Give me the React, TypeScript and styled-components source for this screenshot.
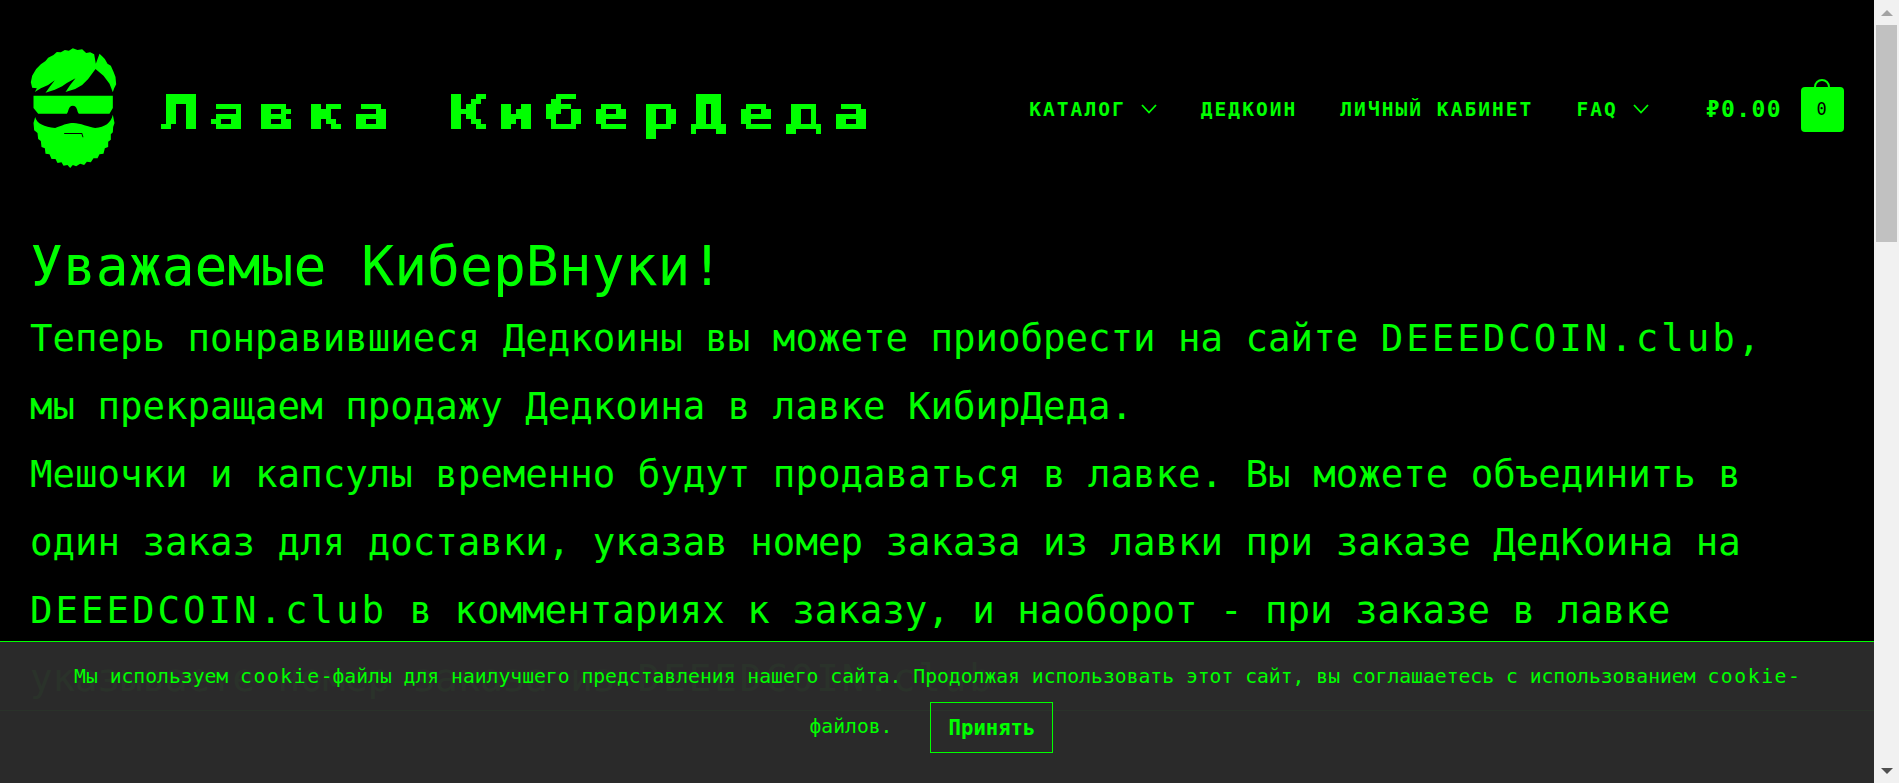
import { createGlobalStyle, styled } from "styled-components";

const green = "#00ff00";

const GlobalStyle = createGlobalStyle`
  html, body { margin: 0; height: 100%; overflow: hidden; background: #000; }
  #root { height: 100%; }
`;

const Shell = styled.div`
  display: flex;
  height: 100vh;
  font-family: "DejaVu Sans Mono", monospace;
  color: ${green};
`;

const Page = styled.div`
  position: relative;
  flex: 1;
  min-width: 0;
  overflow: hidden;
  background: #000;
`;

const Header = styled.header`
  display: flex;
  align-items: center;
  justify-content: space-between;
  height: 120px;
  padding: 48px 30px 0;
`;

const Brand = styled.a`
  display: flex;
  align-items: center;
`;

const Title = styled.div`
  width: 720px;
  margin-left: 44px;
  margin-top: 12px;
  filter: url(#pixelate);
`;

const TitleText = styled.span`
  display: block;
  font-weight: 700;
  font-size: 45px;
  line-height: 60px;
  letter-spacing: 7.2px;
  white-space: pre;
  transform: scaleX(1.4);
  transform-origin: left center;
`;

const Nav = styled.nav`
  display: flex;
  align-items: center;
  padding-top: 2px;
`;

const NavItem = styled.a<{ $gap?: number }>`
  display: flex;
  align-items: center;
  gap: 15px;
  margin-right: ${(p) => p.$gap ?? 44}px;
  font-weight: 700;
  font-size: 19.5px;
  letter-spacing: 2.05px;
  white-space: nowrap;
`;

const Price = styled.span`
  margin-right: 19px;
  font-weight: 700;
  font-size: 23px;
  letter-spacing: 1.4px;
`;

const Bag = styled.a`
  position: relative;
  display: flex;
  align-items: center;
  justify-content: center;
  width: 43px;
  height: 45px;
  border-radius: 4px;
  background: ${green};
  color: #000;
  font-size: 17px;

  &::before {
    content: "";
    position: absolute;
    left: 13px;
    top: -8px;
    width: 16px;
    height: 16px;
    box-sizing: border-box;
    border: 2.5px solid ${green};
    border-radius: 50%;
  }
`;

const BagCount = styled.span`
  position: relative;
  margin-left: -2px;
`;

const Content = styled.main`
  padding: 0 74px 0 30px;
  margin-top: 66px;
`;

const Heading = styled.h1`
  margin: 0 0 6px;
  font-weight: 400;
  font-size: 54.7px;
  line-height: 64px;
  word-spacing: 2px;
`;

const Paragraph = styled.p`
  margin: 0;
  font-size: 37.4px;
  line-height: 68px;
`;

// Latin words sit wider than the Cyrillic in the original
const Wide = styled.span`
  letter-spacing: 0.08em;
`;

const Rule = styled.hr`
  margin: -2px 0 0;
  border: 0;
  border-top: 1px solid ${green};
`;

const CookieBar = styled.div`
  position: absolute;
  left: 0;
  right: 0;
  bottom: 0;
  height: 142px;
  box-sizing: border-box;
  padding: 10px 60px 0;
  border-top: 1px solid ${green};
  background: rgba(43, 43, 43, 0.97);
  text-align: center;
  font-size: 19.7px;
  line-height: 50px;
`;

const CookieButton = styled.button`
  display: inline-block;
  width: 123px;
  height: 51px;
  margin: 0 11px 0 38px;
  padding: 0;
  border: 1px solid ${green};
  background: transparent;
  color: ${green};
  font-family: inherit;
  font-weight: 700;
  font-size: 20.6px;
  vertical-align: middle;
`;

const Scrollbar = styled.aside`
  display: flex;
  flex-direction: column;
  align-items: center;
  width: 25px;
  background: #f1f1f1;
`;

const ScrollButton = styled.div`
  display: flex;
  align-items: center;
  justify-content: center;
  height: 25px;
`;

const Arrow = styled.span<{ $down?: boolean }>`
  width: 0;
  height: 0;
  border-left: 6px solid transparent;
  border-right: 6px solid transparent;
  ${(p) => (p.$down ? "border-top: 6px solid #505050;" : "border-bottom: 6px solid #a3a3a3;")}
`;

const Track = styled.div`
  flex: 1;
  width: 100%;
`;

const Thumb = styled.div`
  width: 21px;
  height: 217px;
  margin: 0 auto;
  background: #c1c1c1;
`;

const mono = (text: string) =>
  text.split(/([A-Za-z][A-Za-z.,]*)/).map((run, i) => (i % 2 ? <Wide key={i}>{run}</Wide> : run));

const Chevron = () => (
  <svg width="16" height="10" viewBox="0 0 16 10" fill="none" stroke={green} strokeWidth="1.8">
    <path d="M1 1 L8 8.5 L15 1" />
  </svg>
);

const Logo = () => (
  <svg width="87" height="120" viewBox="30 25 260 360" fill={green}>
    <path d="M32 128 L36 108 L48 88 L62 74 L76 64 L84 54 L100 46 L110 37 L122 38 L134 31 L146 33 L158 26 L172 31 L186 29 L198 40 L210 38 L222 44 L227 72 L238 42 L246 50 L254 58 L262 72 L272 78 L280 96 L286 112 L288 134 L282 146 L278 158 L268 132 L250 108 L226 88 L204 118 L186 136 L165 148 L136 157 L150 136 L166 116 L140 130 L126 140 L104 150 L76 159 L90 140 L104 122 L84 136 L62 146 L44 157 L50 146 L36 144 Z" />
    <path d="M40 168 H278 V205 L268 222 H176 C170 216 172 198 158 198 C144 198 146 216 140 222 H54 L40 205 Z" />
    <path d="M45 232 C50 252 72 262 105 265 C125 258 140 250 160 250 C180 250 205 262 225 265 C255 262 272 250 278 225 L283 250 L279 262 L278 278 L272 284 L272 300 L264 306 L264 322 L254 326 L250 342 L238 344 L232 356 L220 356 L212 368 L200 366 L192 376 L180 372 L168 380 L158 376 L150 385 L142 376 L130 378 L124 368 L112 370 L106 358 L94 358 L88 344 L76 342 L74 326 L64 322 L62 304 L54 298 L52 280 L42 272 L40 250 Z" />
    <path d="M132 280 H186 L190 293 H187 L184 283 H132 Z" fill="#000" />
  </svg>
);

const PixelFilter = () => (
  <svg width="0" height="0" style={{ position: "absolute" }}>
    <filter id="pixelate" x="0" y="0" width="100%" height="100%" colorInterpolationFilters="sRGB">
      <feFlood x="2" y="2" width="1" height="1" floodColor={green} />
      <feComposite width="5" height="5" />
      <feTile result="grid" />
      <feComposite in="SourceGraphic" in2="grid" operator="in" />
      <feComponentTransfer>
        <feFuncA type="discrete" tableValues="0 1" />
      </feComponentTransfer>
      <feMorphology operator="dilate" radius="2" />
    </filter>
  </svg>
);

const App = () => (
  <>
    <GlobalStyle />
    <PixelFilter />
    <Shell>
      <Page>
        <Header>
          <Brand>
            <Logo />
            <Title>
              <TitleText>Лавка КиберДеда</TitleText>
            </Title>
          </Brand>
          <Nav>
            <NavItem>
              КАТАЛОГ <Chevron />
            </NavItem>
            <NavItem $gap={43}>ДЕДКОИН</NavItem>
            <NavItem $gap={43}>ЛИЧНЫЙ КАБИНЕТ</NavItem>
            <NavItem $gap={57}>
              FAQ <Chevron />
            </NavItem>
            <Price>₽0.00</Price>
            <Bag>
              <BagCount>0</BagCount>
            </Bag>
          </Nav>
        </Header>
        <Content>
          <Heading>{mono("Уважаемые КиберВнуки!")}</Heading>
          <Paragraph>
            {mono("Теперь понравившиеся Дедкоины вы можете приобрести на сайте DEEEDCOIN.club, мы прекращаем продажу Дедкоина в лавке КибирДеда.")}
          </Paragraph>
          <Paragraph>
            {mono("Мешочки и капсулы временно будут продаваться в лавке. Вы можете объединить в один заказ для доставки, указав номер заказа из лавки при заказе ДедКоина на DEEEDCOIN.club в комментариях к заказу, и наоборот - при заказе в лавке указываете номер заказа из DEEEDCOIN.club")}
          </Paragraph>
        </Content>
        <Rule />
        <CookieBar>
          {mono("Мы используем cookie-файлы для наилучшего представления нашего сайта. Продолжая использовать этот сайт, вы соглашаетесь с использованием cookie-файлов.")}
          <CookieButton>Принять</CookieButton>
        </CookieBar>
      </Page>
      <Scrollbar>
        <ScrollButton>
          <Arrow />
        </ScrollButton>
        <Track>
          <Thumb />
        </Track>
        <ScrollButton>
          <Arrow $down />
        </ScrollButton>
      </Scrollbar>
    </Shell>
  </>
);

export default App;
